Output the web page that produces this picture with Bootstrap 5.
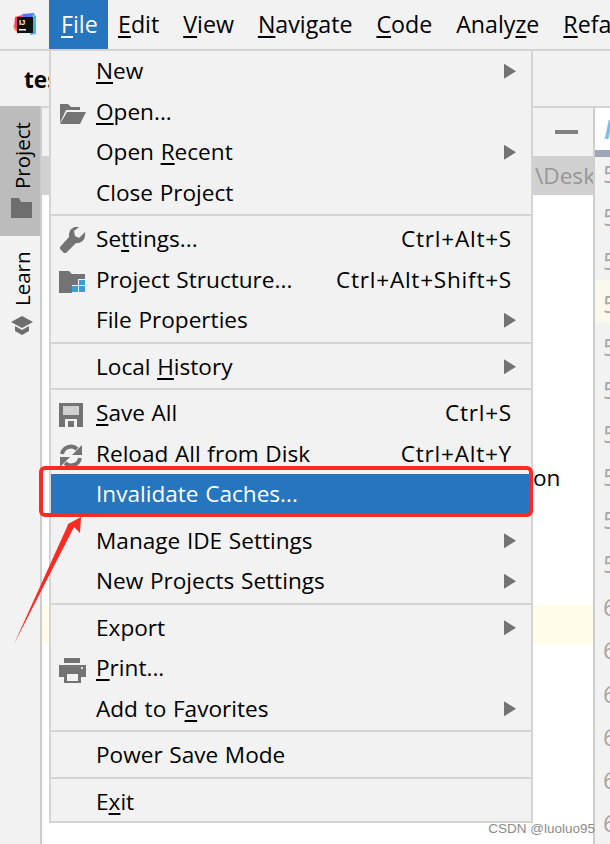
<!doctype html>
<html lang="en">
<head>
<meta charset="utf-8">
<link href="https://cdn.jsdelivr.net/npm/bootstrap@5.3.0/dist/css/bootstrap.min.css" rel="stylesheet">
<style>
html,body{margin:0;height:844px;overflow:hidden;background:#fff}
body{font-family:"Open Sans","Noto Sans",sans-serif;font-size:22.6px;color:#000}
u{text-underline-offset:3px;text-decoration-thickness:2px}
.ide{width:610px;height:844px;overflow:hidden;position:relative}
.menubar{height:51px;background:#f2f2f2;border-bottom:2px solid #d4d4d4;flex:none;font-size:23.2px}
.logo-cell{width:49px;flex:none}
.top-item{height:49px;line-height:49px;padding:0 12px;white-space:nowrap;flex:none}
.top-item.on{background:#2675bf;color:#fff;width:59px;padding:0 12px}
.top-item.first{padding-left:10px}
.nav-strip{height:55px;background:#f2f2f2;flex:none;padding-left:24px;line-height:58px;font-weight:700}
.body-row{height:738px}
.toolstrip{width:42px;background:#f2f2f2;border-right:2px solid #cdcdcd;flex:none}
.tool-tab{width:40px;writing-mode:vertical-rl;transform:rotate(180deg);gap:9px;padding-top:18px;padding-right:4px;font-size:20.5px;line-height:1.2}
.tool-on{height:130px;background:#bcbcbc}
.tool-off{height:117px}
.tool-ico{transform:rotate(180deg);flex:none}
.project-pane{width:551px;flex:none;background:#fff}
.pane-head{height:50px;padding-right:15px;border-top:2px solid #d4d4d4;background:#f2f2f2}
.min-bar{width:23px;height:4px;background:#808080}
.path-row{height:39px;background:#d0d0d0;color:#969696;padding-left:493px;line-height:39px;white-space:nowrap;overflow:hidden}
.stray-on{margin:268px 0 0 491px;line-height:30px}
.hl-yellow{height:39px;margin-top:112px;background:#fffde9}
.editor{flex:1;background:#f2f2f2;border-left:2px solid #cdcdcd;overflow:hidden;min-width:0}
.edit-tab{height:44px;background:#fff;border-top:2px solid #d4d4d4;color:#6cc5ea;font-style:italic;font-weight:700;font-size:26px;padding-left:9px;line-height:42px;white-space:nowrap;overflow:hidden}
.edit-mark{height:7px;background:#9ba7b8;margin-bottom:-7px;position:relative}
.gutter-num{height:43.3px;line-height:47px;color:#a7a7a7;padding-left:8px;font-size:24px;overflow:hidden}
.gutter-now{background:#fbf8ec}
.filemenu{position:absolute;left:49px;top:50px;width:484px;background:#f2f2f2;border:2px solid #d4d4d4;border-top-width:1px;height:773px}
.mi{height:40.5px;line-height:38px;white-space:nowrap}
.mi-ico{width:45px;flex:none}
.mi-label{flex:1;word-spacing:.8px}
.mi-key{padding-right:19px;letter-spacing:.75px}
.mi-arrow{width:12px;height:15px;margin-right:15px;background:#737373;clip-path:polygon(0 0,100% 50%,0 100%)}
.mi-on{background:#2675bf;color:#fff}
.sep{height:6px;position:relative}
.sep::after{content:"";position:absolute;left:0;right:0;top:1px;height:2px;background:#d4d4d4}
.sep-none::after{display:none}
.note-box{position:absolute;left:39px;top:466px;width:494px;height:51px;border:4px solid #fb2a22;border-radius:6px;pointer-events:none}
.note-arrow{position:absolute;left:0;top:505px;pointer-events:none}
.mark-text{position:absolute;right:15px;bottom:7px;font-family:"Liberation Sans",sans-serif;font-size:13.5px;line-height:17px;color:#8b8b8b}
</style>
</head>
<body>
<div class="ide d-flex flex-column">
  <div class="menubar d-flex align-items-start">
    <div class="logo-cell d-flex justify-content-center pt-2 mt-1">
      <svg width="25" height="25" viewBox="0 0 25 25"><path d="M3 5 L10 3 L12 8 L6 20 L2 17Z" fill="#fc3a66"/><path d="M10 2 L22 1 L24 10 L12 8Z" fill="#5f6ef0"/><path d="M1 12 L8 23 L2 17Z" fill="#fc8c2b"/><path d="M20 2 L24 4 L24 22 L18 23Z" fill="#3fb8e8"/><rect x="5" y="5" width="16" height="16" fill="#111"/><text x="7" y="13" font-size="7.5" font-weight="700" fill="#fff" font-family="Liberation Sans">IJ</text><rect x="7" y="17" width="7" height="1.5" fill="#fff"/></svg>
    </div>
    <div class="top-item on"><u>F</u>ile</div>
    <div class="top-item first"><u>E</u>dit</div>
    <div class="top-item"><u>V</u>iew</div>
    <div class="top-item"><u>N</u>avigate</div>
    <div class="top-item"><u>C</u>ode</div>
    <div class="top-item">Analy<u>z</u>e</div>
    <div class="top-item"><u>R</u>efactor</div>
  </div>
  <div class="nav-strip">test</div>
  <div class="body-row d-flex">
    <div class="toolstrip">
      <div class="tool-tab tool-on d-flex align-items-center justify-content-start"><svg class="tool-ico" width="21" height="20" viewBox="0 0 21 20"><path d="M0 0h8l2 4h11v16H0z" fill="#6e6e6e"/></svg><span>Project</span></div>
      <div class="tool-tab tool-off d-flex align-items-center justify-content-start"><svg class="tool-ico" width="22" height="20" viewBox="0 0 22 20"><path d="M11 1 22 7 11 13 0 7Z M4 11l7 4 7-4v5l-7 4-7-4z" fill="#6e6e6e"/></svg><span>Learn</span></div>
    </div>
    <div class="project-pane">
      <div class="pane-head d-flex align-items-center justify-content-end"><div class="min-bar"></div></div>
      <div class="path-row">\Desktop</div>
      <div class="stray-on">on</div>
      <div class="hl-yellow"></div>
    </div>
    <div class="editor">
      <div class="edit-tab">M</div>
      <div class="edit-mark"></div>
      <div class="gutter-num">5</div><div class="gutter-num">5</div><div class="gutter-num">5</div><div class="gutter-num gutter-now">5</div><div class="gutter-num">5</div><div class="gutter-num">5</div><div class="gutter-num">5</div><div class="gutter-num">5</div><div class="gutter-num">5</div><div class="gutter-num">5</div><div class="gutter-num">6</div><div class="gutter-num">6</div><div class="gutter-num">6</div><div class="gutter-num">6</div><div class="gutter-num">6</div><div class="gutter-num">6</div>
    </div>
  </div>
  <div class="filemenu">
    <div class="mi d-flex align-items-center"><div class="mi-ico"></div><div class="mi-label"><u>N</u>ew</div><div class="mi-arrow"></div></div>
    <div class="mi d-flex align-items-center"><div class="mi-ico ps-2"><svg width="28" height="22" viewBox="0 0 28 22"><path d="M1 1h8l3 3h9v3H7L1 20z" fill="#737373"/><path d="M8 9h19l-6 12H1z" fill="#737373"/></svg></div><div class="mi-label"><u>O</u>pen...</div></div>
    <div class="mi d-flex align-items-center"><div class="mi-ico"></div><div class="mi-label">Open <u>R</u>ecent</div><div class="mi-arrow"></div></div>
    <div class="mi d-flex align-items-center"><div class="mi-ico"></div><div class="mi-label">Close Project</div></div>
    <div class="sep"></div>
    <div class="mi d-flex align-items-center"><div class="mi-ico ps-2"><svg width="28" height="28" viewBox="0 0 28 28"><path d="M26 5 20 11 16 9 15 4 20 0C15-1 10 2 10 8L10 10 1 20 1 22 5 26 7 26 17 16C23 17 27 12 26 5Z" fill="#737373"/></svg></div><div class="mi-label">Se<u>t</u>tings...</div><div class="mi-key">Ctrl+Alt+S</div></div>
    <div class="mi d-flex align-items-center"><div class="mi-ico ps-2"><svg width="27" height="23" viewBox="0 0 27 23"><path d="M0 1h10l3 3h13v5H19v6h-6v8H0z" fill="#737373"/><path d="M20 10h6v5h-6zM13 16h6v6h-6zM20 16h6v6h-6z" fill="#389fd6"/></svg></div><div class="mi-label">Project Structure...</div><div class="mi-key">Ctrl+Alt+Shift+S</div></div>
    <div class="mi d-flex align-items-center"><div class="mi-ico"></div><div class="mi-label">File Properties</div><div class="mi-arrow"></div></div>
    <div class="sep"></div>
    <div class="mi d-flex align-items-center"><div class="mi-ico"></div><div class="mi-label">Local <u>H</u>istory</div><div class="mi-arrow"></div></div>
    <div class="sep"></div>
    <div class="mi d-flex align-items-center"><div class="mi-ico ps-2"><svg width="24" height="24" viewBox="0 0 24 24"><path d="M0 0h24v24H0z" fill="#737373"/><path d="M4 3h16v9H4z" fill="#d0d0d0"/><path d="M6 16h12v8H6z" fill="#f2f2f2"/><path d="M9 18h6v6H9z" fill="#737373"/></svg></div><div class="mi-label"><u>S</u>ave All</div><div class="mi-key">Ctrl+S</div></div>
    <div class="mi d-flex align-items-center"><div class="mi-ico ps-2"><svg width="24" height="24" viewBox="0 0 24 24"><path d="M3 10A9 9 0 0 1 18 5" fill="none" stroke="#737373" stroke-width="4"/><path d="M21 14A9 9 0 0 1 6 19" fill="none" stroke="#737373" stroke-width="4"/><path d="M23 1V11H13Z" fill="#737373"/><path d="M1 23V13H11Z" fill="#737373"/></svg></div><div class="mi-label">Reload All from Disk</div><div class="mi-key">Ctrl+Alt+Y</div></div>
    <div class="mi mi-on d-flex align-items-center"><div class="mi-ico"></div><div class="mi-label">Invalidate Caches...</div></div>
    <div class="sep sep-none"></div>
    <div class="mi d-flex align-items-center"><div class="mi-ico"></div><div class="mi-label">Manage IDE Settings</div><div class="mi-arrow"></div></div>
    <div class="mi d-flex align-items-center"><div class="mi-ico"></div><div class="mi-label">New Projects Settings</div><div class="mi-arrow"></div></div>
    <div class="sep"></div>
    <div class="mi d-flex align-items-center"><div class="mi-ico"></div><div class="mi-label">Export</div><div class="mi-arrow"></div></div>
    <div class="mi d-flex align-items-center"><div class="mi-ico ps-2"><svg width="27" height="25" viewBox="0 0 27 25"><path d="M5 0h16v5H5z" fill="#737373"/><path fill-rule="evenodd" d="M0 7h27v12h-5v6H5v-6H0zM8 16v7h11v-7z" fill="#737373"/><circle cx="23" cy="10" r="1" fill="#fff"/></svg></div><div class="mi-label"><u>P</u>rint...</div></div>
    <div class="mi d-flex align-items-center"><div class="mi-ico"></div><div class="mi-label">Add to F<u>a</u>vorites</div><div class="mi-arrow"></div></div>
    <div class="sep"></div>
    <div class="mi d-flex align-items-center"><div class="mi-ico"></div><div class="mi-label">Power Save Mode</div></div>
    <div class="sep"></div>
    <div class="mi d-flex align-items-center"><div class="mi-ico"></div><div class="mi-label">E<u>x</u>it</div></div>
  </div>
  <div class="note-box"></div>
  <svg class="note-arrow" width="90" height="145" viewBox="0 0 90 145"><path d="M14 139 L67 22 L68 19 L81 12 L80 28 L74 22 Z" fill="#fb2a22"/></svg>
  <div class="mark-text">CSDN @luoluo95</div>
</div>
</body>
</html>
